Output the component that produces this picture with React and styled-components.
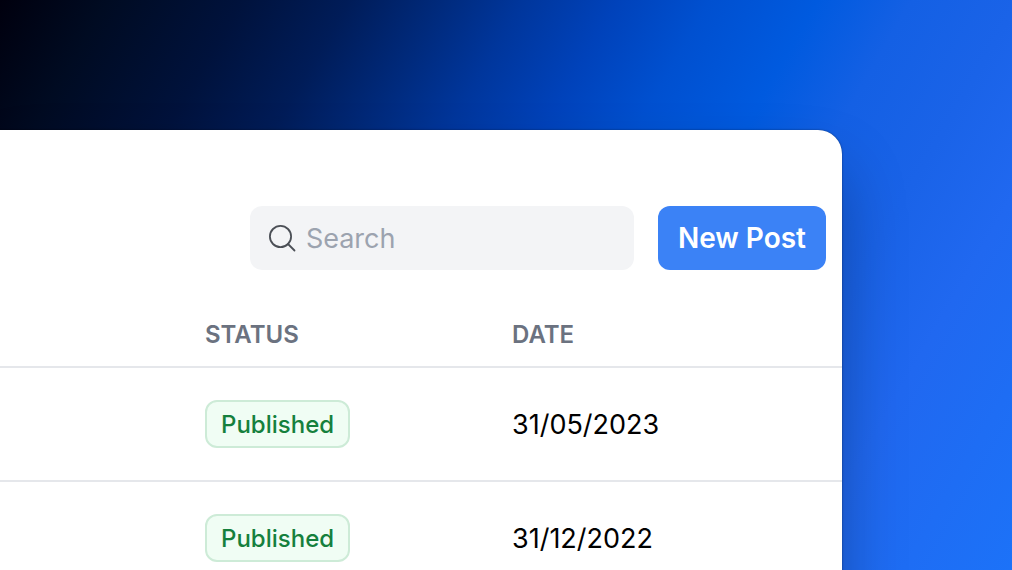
import React from "react";
import styled, { createGlobalStyle } from "styled-components";

const GlobalStyle = createGlobalStyle`
  *, *::before, *::after { box-sizing: border-box; }
  body {
    margin: 0;
    font-family: Inter, "Liberation Sans", sans-serif;
    font-size: 27px;
    line-height: 32px;
    color: #000;
  }
`;

const Page = styled.div`
  display: flex;
  height: 100vh;
  overflow: hidden;
  padding: 130px 170px 0 0;
  background: linear-gradient(
    120deg,
    #00000e 0%,
    #000b22 8%,
    #00123c 18%,
    #001c58 26%,
    #002a7c 33%,
    #00369c 39%,
    #0042ba 46%,
    #0050d0 53%,
    #005adf 61%,
    #1460e4 68%,
    #1a63e8 76%,
    #2068f0 84%,
    #1c72f8 100%
  );
`;

const Panel = styled.main`
  flex: 1;
  min-width: 0;
  align-self: flex-start;
  padding-bottom: 32px;
  background: #fff;
  border-radius: 0 24px 0 0;
  box-shadow: 0 0 2px rgba(0, 0, 0, 0.5), 0 40px 64px rgba(0, 0, 0, 0.28);
`;

const Toolbar = styled.header`
  display: flex;
  justify-content: flex-end;
  gap: 24px;
  padding: 76px 16px 32px;
`;

const SearchBox = styled.label`
  display: flex;
  align-items: center;
  gap: 10px;
  width: 384px;
  height: 64px;
  padding: 0 18px;
  background: #f3f4f6;
  border-radius: 12px;
`;

const SearchIcon = styled.svg`
  flex: none;
  width: 28px;
  height: 28px;
  fill: none;
  stroke: #4b4f56;
  stroke-width: 1.8;
  stroke-linecap: round;
`;

const SearchInput = styled.input`
  flex: 1;
  min-width: 0;
  padding: 2px 0 0;
  border: 0;
  outline: 0;
  background: transparent;
  font: inherit;
  &::placeholder { color: #9ca3af; opacity: 1; }
`;

const PrimaryButton = styled.button`
  height: 64px;
  padding: 0 20px;
  border: 0;
  border-radius: 12px;
  background: #3b82f6;
  color: #fff;
  font: inherit;
  font-size: 28px;
  font-weight: 600;
  white-space: nowrap;
`;

const Table = styled.table`
  width: 100%;
  table-layout: fixed;
  border-collapse: separate;
  border-spacing: 0;
`;

const HeadCell = styled.th`
  width: ${(p) => p.$width || "auto"};
  padding: 17px 0 15px;
  border-bottom: 2px solid #e5e7eb;
  color: #6b7280;
  font-size: 24px;
  font-weight: 600;
  text-align: left;
`;

const Cell = styled.td`
  padding: 32px 0;
  border-bottom: 2px solid #e5e7eb;
`;

const PostDate = styled.time`
  display: block;
  padding-top: 2px;
`;

const Badge = styled.span`
  display: flex;
  align-items: center;
  width: fit-content;
  height: 48px;
  padding: 2px 14px 0;
  border: 2px solid #cdebd7;
  border-radius: 12px;
  background: #f0fdf4;
  color: #15803d;
  font-size: 24px;
  font-weight: 500;
`;

const posts = [
  { status: "Published", date: "31/05/2023" },
  { status: "Published", date: "31/12/2022" },
];

export default function App() {
  return (
    <Page>
      <GlobalStyle />
      <Panel>
        <Toolbar>
          <SearchBox>
            <SearchIcon viewBox="0 0 28 28" aria-hidden="true">
              <circle cx="12.5" cy="12.5" r="10.6" />
              <path d="M20 20L26.5 26.5" />
            </SearchIcon>
            <SearchInput type="search" placeholder="Search" aria-label="Search" />
          </SearchBox>
          <PrimaryButton type="button">New Post</PrimaryButton>
        </Toolbar>
        <Table>
          <thead>
            <tr>
              <HeadCell as="td" />
              <HeadCell scope="col" $width="307px">STATUS</HeadCell>
              <HeadCell scope="col" $width="330px">DATE</HeadCell>
            </tr>
          </thead>
          <tbody>
            {posts.map((post) => (
              <tr key={post.date}>
                <Cell />
                <Cell><Badge>{post.status}</Badge></Cell>
                <Cell><PostDate>{post.date}</PostDate></Cell>
              </tr>
            ))}
          </tbody>
        </Table>
      </Panel>
    </Page>
  );
}
